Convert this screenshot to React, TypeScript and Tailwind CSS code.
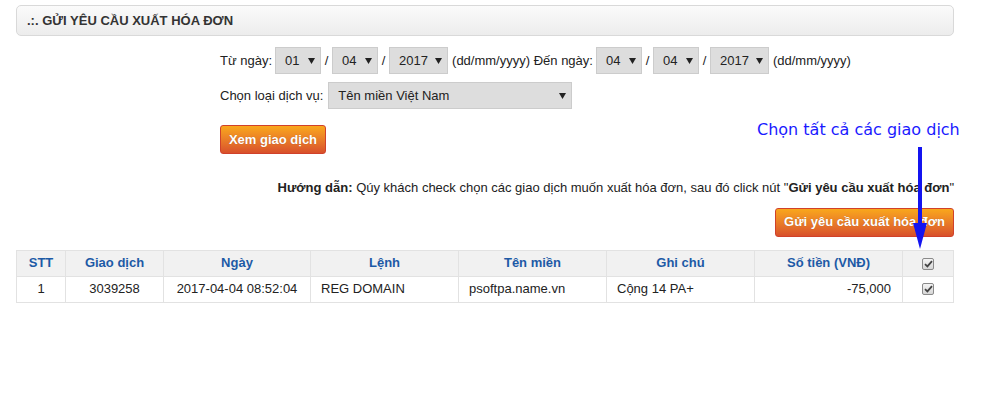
import React from "react";

const font = { fontFamily: '"Liberation Sans", Arial, sans-serif' };

function Sel({ w, text }: { w: string; text: string }) {
  return (
    <div
      className={`${w} h-[27px] bg-[#dddddd] border border-[#cccccc] flex items-center justify-between pl-[9px] pr-[5px] text-[13px] text-[#222]`}
    >
      <span>{text}</span>
      <svg width="7" height="6" viewBox="0 0 7 6">
        <path d="M0 0 L7 0 L3.5 6 Z" fill="#222" />
      </svg>
    </div>
  );
}

function Check() {
  return (
    <span className="inline-flex w-[12px] h-[12px] rounded-[2px] border border-[#8a8a8a] bg-gradient-to-b from-[#f4f4f4] to-[#d6d6d6] items-center justify-center">
      <svg width="9" height="8" viewBox="0 0 9 8">
        <path d="M1 4.2 L3.4 6.4 L8 1.2" stroke="#444" strokeWidth="1.8" fill="none" />
      </svg>
    </span>
  );
}

function OrangeBtn({ children, w }: { children: React.ReactNode; w: string }) {
  return (
    <div
      className={`${w} h-[29px] rounded-[3px] border border-[#d0412a] bg-gradient-to-b from-[#f9a71b] to-[#d8502b] text-white font-bold text-[13px] flex items-center justify-center`}
      style={{ textShadow: "0 0 1px rgba(0,0,0,0.25)" }}
    >
      {children}
    </div>
  );
}

export default function App() {
  const cols = ["w-[49px]", "w-[98px]", "w-[147px]", "w-[148px]", "w-[148px]", "w-[148px]", "w-[148px]", "w-[51px]"];
  return (
    <div className="w-[999px] h-[396px] bg-white relative" style={font}>
      <div className="pt-[5px] pl-[16px] w-[954px]">
        <div className="h-[31px] rounded-[5px] border border-[#d9d9d9] bg-gradient-to-b from-[#fbfbfb] to-[#ececec] flex items-center pl-[10px] text-[13px] font-bold text-[#333]">
          .:. GỬI YÊU CẦU XUẤT HÓA ĐƠN
        </div>

        <div className="pl-[204px] pt-[11px] text-[13px] text-[#222]">
          <div className="flex items-center h-[27px]">
            <span className="mr-[3px]">Từ ngày:</span>
            <Sel w="w-[46px]" text="01" />
            <span className="w-[11px] text-center">/</span>
            <Sel w="w-[46px]" text="04" />
            <span className="w-[11px] text-center">/</span>
            <Sel w="w-[59px]" text="2017" />
            <span className="ml-[4px] mr-[3px]">(dd/mm/yyyy) Đến ngày:</span>
            <Sel w="w-[46px]" text="04" />
            <span className="w-[11px] text-center">/</span>
            <Sel w="w-[46px]" text="04" />
            <span className="w-[11px] text-center">/</span>
            <Sel w="w-[59px]" text="2017" />
            <span className="ml-[4px]">(dd/mm/yyyy)</span>
          </div>
          <div className="flex items-center h-[27px] mt-[8px]">
            <span className="mr-[5px]">Chọn loại dịch vụ:</span>
            <Sel w="w-[244px]" text="Tên miền Việt Nam" />
          </div>
          <div className="mt-[16px] flex">
            <OrangeBtn w="w-[106px]">Xem giao dịch</OrangeBtn>
          </div>
        </div>

        <div className="mt-[24px] text-right text-[13px] text-[#222]">
          <b>Hướng dẫn:</b> Qúy khách check chọn các giao dịch muốn xuất hóa đơn, sau đó click nút "<b>Gửi yêu cầu xuất hóa đơn</b>"
        </div>
        <div className="mt-[10px] flex justify-end">
          <OrangeBtn w="w-[179px]">Gửi yêu cầu xuất hóa đơn</OrangeBtn>
        </div>

        <table className="mt-[13px] w-[938px] border-collapse text-[13px] text-[#222]">
          <thead>
            <tr className="bg-[#f1f1f1] h-[26px]">
              {["STT", "Giao dịch", "Ngày", "Lệnh", "Tên miền", "Ghi chú", "Số tiền (VNĐ)"].map((h, i) => (
                <th key={h} className={`${cols[i]} border border-[#e2e2e2] font-bold text-[#1d5aa6] text-center p-0`}>
                  {h}
                </th>
              ))}
              <th className={`${cols[7]} border border-[#e2e2e2] text-center p-0`}>
                <div className="flex justify-center pt-[2px]"><Check /></div>
              </th>
            </tr>
          </thead>
          <tbody>
            <tr className="h-[26px]">
              <td className="border border-[#e2e2e2] text-center">1</td>
              <td className="border border-[#e2e2e2] text-center">3039258</td>
              <td className="border border-[#e2e2e2] text-center">2017-04-04 08:52:04</td>
              <td className="border border-[#e2e2e2] pl-[10px]">REG DOMAIN</td>
              <td className="border border-[#e2e2e2] pl-[10px]">psoftpa.name.vn</td>
              <td className="border border-[#e2e2e2] pl-[10px]">Cộng 14 PA+</td>
              <td className="border border-[#e2e2e2] text-right pr-[11px]">-75,000</td>
              <td className="border border-[#e2e2e2] text-center">
                <div className="flex justify-center"><Check /></div>
              </td>
            </tr>
          </tbody>
        </table>
      </div>

      <div className="absolute left-[757px] top-[122px] text-[#1a1aff] leading-none whitespace-nowrap" style={{ fontFamily: '"DejaVu Sans", sans-serif', fontSize: "16px" }}>
        Chọn tất cả các giao dịch
      </div>
      <svg className="absolute left-[908px] top-[145px]" width="24" height="106" viewBox="0 0 24 106">
        <path d="M12 2 L12 85" stroke="#1414f0" strokeWidth="4" />
        <path d="M5 78 L12 104 L19 78 Z" fill="#1414f0" />
      </svg>
    </div>
  );
}
